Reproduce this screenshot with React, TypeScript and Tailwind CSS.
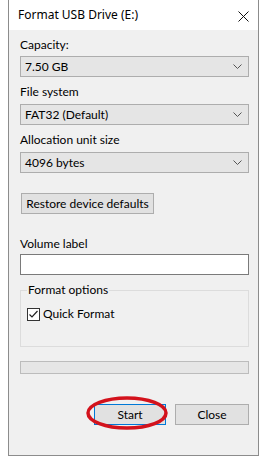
import React from 'react';

const font = { fontFamily: 'Lato, "Noto Sans", sans-serif' };
const titleFont = { fontFamily: '"Noto Sans", sans-serif' };

function Chevron() {
  return (
    <svg width="9" height="5" viewBox="0 0 9 5" className="mr-[6px]">
      <path d="M0.5 0.5 L4.5 4.5 L8.5 0.5" fill="none" stroke="#555" strokeWidth="1" />
    </svg>
  );
}

function Select({ value }: { value: string }) {
  return (
    <div className="flex h-[21px] w-[229px] items-center justify-between border border-[#adadad] bg-[#e5e5e5] pl-[4px]">
      <span>{value}</span>
      <Chevron />
    </div>
  );
}

export default function App() {
  return (
    <div className="h-[460px] w-[264px] overflow-hidden bg-white text-[12px] leading-[16px] text-black" style={font}>
      <div className="ml-[8px] flex h-[456px] w-[251px] flex-col border-x border-b border-[#8c8c8c] bg-[#f0f0f0]">
        <div className="flex h-[30px] shrink-0 items-center justify-between bg-white pl-[9px] pr-[9px]" style={titleFont}>
          <span>Format USB Drive (E:)</span>
          <svg width="11" height="11" viewBox="0 0 11 11" className="mt-[2px]">
            <path d="M0.5 0.5 L10.5 10.5 M10.5 0.5 L0.5 10.5" stroke="#111" strokeWidth="1" />
          </svg>
        </div>

        <div className="flex flex-col pl-[11px]">
          <div className="mt-[7px]">Capacity:</div>
          <div className="mt-[3px]"><Select value="7.50 GB" /></div>
          <div className="mt-[7px]">File system</div>
          <div className="mt-[4px]"><Select value="FAT32 (Default)" /></div>
          <div className="mt-[7px]">Allocation unit size</div>
          <div className="mt-[4px]"><Select value="4096 bytes" /></div>

          <button className="ml-[1px] mt-[20px] flex h-[21px] w-[133px] items-center justify-center border border-[#adadad] bg-[#e1e1e1]">
            Restore device defaults
          </button>

          <div className="mt-[22px]">Volume label</div>
          <div className="mt-[2px] h-[21px] w-[229px] border border-[#7a7a7a] bg-white" />

          <div className="relative mt-[15px] h-[57px] w-[229px] border border-[#dcdcdc]">
            <span className="absolute left-[6px] top-[-9px] bg-[#f0f0f0] px-[1px]">Format options</span>
            <div className="ml-[6px] mt-[15px] flex items-center gap-[3px]">
              <svg width="13" height="13" viewBox="0 0 13 13">
                <rect x="0.5" y="0.5" width="12" height="12" fill="#fff" stroke="#333" />
                <path d="M2.5 6.5 L5 9 L10.5 3" fill="none" stroke="#222" strokeWidth="1.2" />
              </svg>
              <span>Quick Format</span>
            </div>
          </div>

          <div className="mt-[14px] h-[13px] w-[229px] border border-[#bcbcbc] bg-[#e6e6e6]" />

          <div className="mt-[30px] flex gap-[9px] pl-[74px]">
            <div className="relative">
              <button className="flex h-[21px] w-[72px] items-center justify-center border border-[#0078d7] bg-[#e1e1e1]">
                Start
              </button>
              <svg width="86" height="38" viewBox="0 0 86 38" className="pointer-events-none absolute left-[-9px] top-[-9px]">
                <ellipse cx="42" cy="18" rx="39" ry="15" fill="none" stroke="#d3121c" strokeWidth="3.5" />
              </svg>
            </div>
            <button className="flex h-[21px] w-[74px] items-center justify-center border border-[#adadad] bg-[#e1e1e1]">
              Close
            </button>
          </div>
        </div>
      </div>
    </div>
  );
}
